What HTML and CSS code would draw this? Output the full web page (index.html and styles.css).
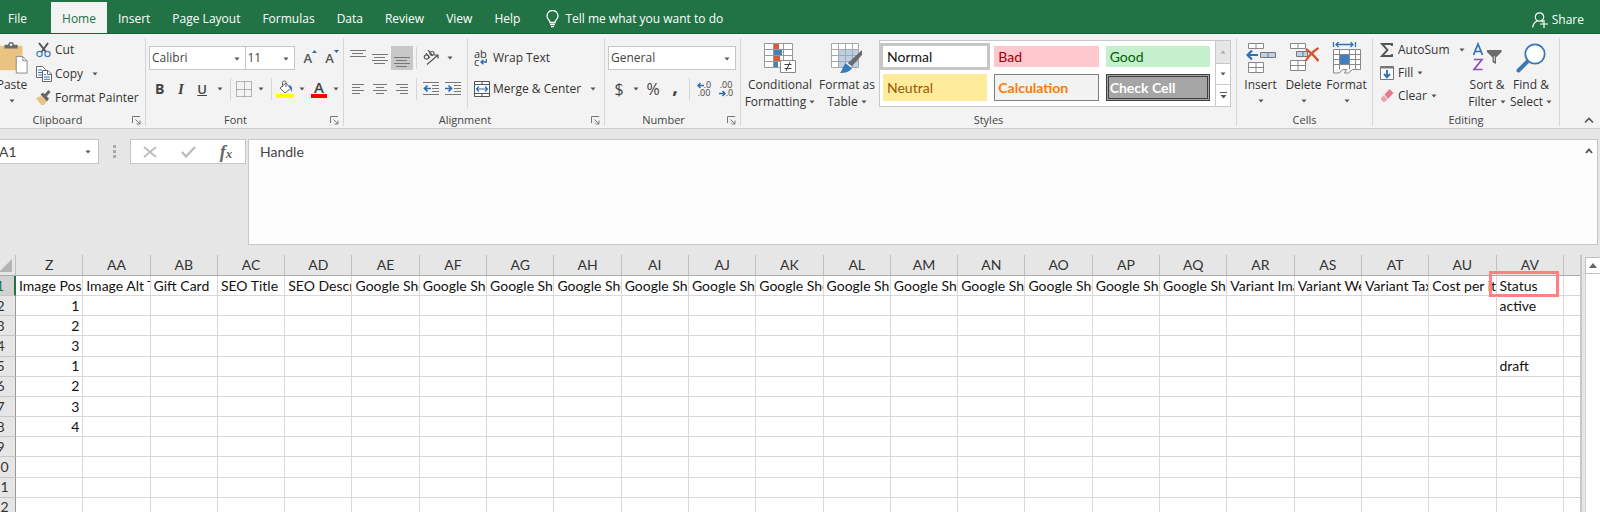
FILE: index.html
```html
<!DOCTYPE html>
<html lang="en">
<head>
<meta charset="utf-8">
<title>Products export</title>
<link rel="stylesheet" href="styles.css">
</head>
<body>
<svg class="defs" aria-hidden="true">
  <symbol id="caret" viewBox="0 0 6 4"><path d="M.5.5h5L3 3.5z" fill="#555"/></symbol>
  <symbol id="launch" viewBox="0 0 9 9"><path d="M.5 7V.5H8M3.5 3.5l4 4M8 4.500V8H4.500" fill="none" stroke="#777"/></symbol>
</svg>
<div class="app">
  <header class="tabs">
    <nav class="tab-list">
      <button class="tab file">File</button>
      <button class="tab active">Home</button>
      <button class="tab">Insert</button>
      <button class="tab">Page Layout</button>
      <button class="tab">Formulas</button>
      <button class="tab">Data</button>
      <button class="tab">Review</button>
      <button class="tab">View</button>
      <button class="tab">Help</button>
      <button class="tab tell"><svg width="13" height="18" viewBox="0 0 13 18" fill="none" stroke="#fff" stroke-width="1.300"><path d="M4 12.500C4 10 1 9 1 6a5.500 5.500 0 0 1 11 0c0 3-3 4-3 6.500zM4.200 14.500h4.600M5 16.700h3"/></svg>Tell me what you want to do</button>
    </nav>
    <button class="tab share"><svg width="16" height="16" viewBox="0 0 16 16" fill="none" stroke="#fff" stroke-width="1.200"><circle cx="7.500" cy="5" r="4.200"/><path d="M.700 15.500c.3-3.500 2-5.500 4.500-6.500M9.500 9l1.500 1M8 12h8M12 8v8"/></svg>Share</button>
  </header>

  <section class="ribbon">
    <div class="group clipboard">
      <div class="body">
        <button class="big paste"><svg width="34" height="34" viewBox="0 0 34 34"><path d="M1 4h27v26H1z" fill="#eac282"/><path d="M9 7V3h4a3 3 0 0 1 6 0h4v4z" fill="#6b6b6b"/><circle cx="16" cy="3" r="1.300" fill="#fff"/><path d="M21.500 15.500h7l4.500 4.500v13H21.500z" fill="#fff" stroke="#888"/><path d="M28.500 15.500V20H33" fill="none" stroke="#888"/></svg><span>Paste</span><svg class="caret"><use href="#caret"/></svg></button>
        <div class="stack">
          <button class="cmd"><svg width="16" height="16" viewBox="0 0 16 16"><path d="M3 1l7 9M12 1L5.500 10" stroke="#555" stroke-width="2" fill="none"/><g fill="none" stroke="#4a80b8" stroke-width="1.300"><circle cx="3.500" cy="12" r="2.600"/><circle cx="11.500" cy="12" r="2.600"/></g></svg>Cut</button>
          <button class="cmd"><svg width="16" height="16" viewBox="0 0 16 16"><path d="M.500.500h6l3 3v8h-9z" fill="#fff" stroke="#666"/><path d="M2 4h4M2 6.500h4M2 9h4" stroke="#3b78b5"/><path d="M6.500 4.500h5.500l3.500 3.500v7.500h-9z" fill="#fff" stroke="#666"/><path d="M11.500 4.500v4h4" fill="none" stroke="#666"/><path d="M8 8.500h2M8 11h6M8 13.300h6" stroke="#3b78b5"/></svg>Copy<svg class="caret far"><use href="#caret"/></svg></button>
          <button class="cmd"><svg width="16" height="16" viewBox="0 0 16 16"><path d="M0 8l5-2 6 5-3 4H5z" fill="#eac282"/><path d="M4.500 4.500L7 2.500l6 6-2 3z" fill="#666"/><path d="M9.500 5.500l4-4.500" stroke="#666" stroke-width="3"/></svg>Format Painter</button>
        </div>
      </div>
      <footer><span>Clipboard</span><button class="launch" aria-label="Clipboard settings"><svg><use href="#launch"/></svg></button></footer>
    </div>

    <div class="group font">
      <div class="body rows">
        <div class="row">
          <label class="pick face"><select aria-label="Font"><option>Calibri</option></select><svg class="caret"><use href="#caret"/></svg></label><label class="pick size"><select aria-label="Font size"><option>11</option></select><svg class="caret"><use href="#caret"/></svg></label>
          <button class="tool grow" aria-label="Increase font size"><span>A</span><svg width="5" height="3"><path d="M0 3L2.500 0 5 3z" fill="#2b6cab"/></svg></button>
          <button class="tool grow" aria-label="Decrease font size"><span>A</span><svg width="5" height="3"><path d="M0 0h5L2.500 3z" fill="#2b6cab"/></svg></button>
        </div>
        <div class="row">
          <button class="tool glyph"><b>B</b></button>
          <button class="tool glyph"><i>I</i></button>
          <button class="tool glyph"><u>U</u></button>
          <button class="tool drop" aria-label="Underline style"><svg class="caret"><use href="#caret"/></svg></button>
          <span class="sep"></span>
          <button class="tool" aria-label="Borders"><svg width="16" height="16" viewBox="0 0 16 16" fill="none"><path d="M.500.500h15v15H.500zM8.500.500v15M.500 8.500h15" stroke="#777" stroke-dasharray="1 1"/></svg></button>
          <button class="tool drop" aria-label="Border style"><svg class="caret"><use href="#caret"/></svg></button>
          <span class="sep"></span>
          <button class="tool" aria-label="Fill color"><svg width="18" height="18" viewBox="0 0 18 18"><path d="M4 8l6-5 4.500 5.500L9 13z" fill="#fff" stroke="#666"/><path d="M6.500 7V2a2 2 0 0 1 3.500 0v5" fill="none" stroke="#666"/><path d="M12.500 5c3 0 4.500 3 3 7-1-2-.5-4-3-7z" fill="#2b6cab"/><path d="M0 14h18v4H0z" fill="#ff0"/></svg></button>
          <button class="tool drop" aria-label="Fill color list"><svg class="caret"><use href="#caret"/></svg></button>
          <button class="tool ink" aria-label="Font color"><span>A</span></button>
          <button class="tool drop" aria-label="Font color list"><svg class="caret"><use href="#caret"/></svg></button>
        </div>
      </div>
      <footer><span>Font</span><button class="launch" aria-label="Font settings"><svg><use href="#launch"/></svg></button></footer>
    </div>

    <div class="group align">
      <div class="body">
        <div class="rows">
          <div class="row">
            <button class="tool" aria-label="Top align"><svg width="16" height="18" viewBox="0 0 16 18"><path d="M0 1.500h16M2 4.500h11M0 7.500h16" stroke="#777"/></svg></button>
            <button class="tool" aria-label="Middle align"><svg width="16" height="18" viewBox="0 0 16 18"><path d="M0 5.500h16M2 8.500h11M0 11.500h16M2 14.500h11" stroke="#777"/></svg></button>
            <button class="tool on" aria-label="Bottom align"><svg width="16" height="18" viewBox="0 0 16 18"><path d="M0 8.500h16M2 11.500h11M0 14.500h16M2 17.500h11" stroke="#777"/></svg></button>
            <span class="sep"></span>
            <button class="tool" aria-label="Orientation"><svg width="17" height="16" viewBox="0 0 17 16"><g fill="none" stroke="#555" stroke-width="1.200"><circle cx="3.500" cy="7" r="2.200"/><path d="M3 3l4 5"/><path d="M5 0l4.500 5.500"/><circle cx="9" cy="3.500" r="2"/><path d="M4 14.500L15 5M15 8.500V5h-4"/></g></svg></button>
            <button class="tool drop" aria-label="Orientation list"><svg class="caret"><use href="#caret"/></svg></button>
          </div>
          <div class="row">
            <button class="tool" aria-label="Align left"><svg width="14" height="12" viewBox="0 0 14 12"><path d="M1 1.500h12M1 4.500h8M1 7.500h12M1 10.500h8" stroke="#777"/></svg></button>
            <button class="tool" aria-label="Center"><svg width="14" height="12" viewBox="0 0 14 12"><path d="M0 1.500h14M3 4.500h8M0 7.500h14M3 10.500h8" stroke="#777"/></svg></button>
            <button class="tool" aria-label="Align right"><svg width="14" height="12" viewBox="0 0 14 12"><path d="M1 1.500h12M5 4.500h8M1 7.500h12M5 10.500h8" stroke="#777"/></svg></button>
            <span class="sep"></span>
            <button class="tool" aria-label="Decrease indent"><svg width="16" height="14" viewBox="0 0 16 14"><path d="M0 .500h16M9 3.500h7M9 6.500h7M9 9.500h7M0 12.500h16" stroke="#777"/><path d="M8 6.500H1.500M4.500 3.500l-3 3 3 3" fill="none" stroke="#2b6cab" stroke-width="1.700"/></svg></button>
            <button class="tool" aria-label="Increase indent"><svg width="16" height="14" viewBox="0 0 16 14"><path d="M0 .500h16M9 3.500h7M9 6.500h7M9 9.500h7M0 12.500h16" stroke="#777"/><path d="M0 6.500h6M3.500 3.500l3 3-3 3" fill="none" stroke="#2b6cab" stroke-width="1.700"/></svg></button>
          </div>
        </div>
        <div class="rows wide">
          <div class="row"><button class="cmd"><span class="wrap-ico"><span>ab</span><span>c<svg width="7" height="6" viewBox="0 0 7 6"><path d="M6.300 0v3H1M3.300.700L1 3l2.300 2.300" fill="none" stroke="#2b6cab" stroke-width="1.300"/></svg></span></span>Wrap Text</button></div>
          <div class="row"><button class="cmd"><svg width="16" height="16" viewBox="0 0 16 16"><path d="M.500.500h15v15H.500zM.500 3.500h15M.500 12.500h15M8 .500v3M8 12.500v3" fill="#fff" stroke="#555"/><path d="M2.500 8h11M5 5.500L2.500 8 5 10.500M11 5.500L13.500 8 11 10.500" fill="none" stroke="#2b6cab" stroke-width="1.200"/></svg>Merge &amp; Center<svg class="caret far"><use href="#caret"/></svg></button></div>
        </div>
      </div>
      <footer><span>Alignment</span><button class="launch" aria-label="Alignment settings"><svg><use href="#launch"/></svg></button></footer>
    </div>

    <div class="group number">
      <div class="body rows">
        <div class="row"><label class="pick format"><select aria-label="Number format"><option>General</option></select><svg class="caret"><use href="#caret"/></svg></label></div>
        <div class="row">
          <button class="tool sym">$</button>
          <button class="tool drop" aria-label="Currency list"><svg class="caret"><use href="#caret"/></svg></button>
          <button class="tool sym">%</button>
          <button class="tool sym comma">,</button>
          <span class="sep"></span>
          <button class="tool dec" aria-label="Increase decimal"><span><svg width="7" height="7" viewBox="0 0 7 7"><path d="M7 3.500H1M3.500 1L1 3.500 3.500 6" fill="none" stroke="#2b6cab" stroke-width="1.500"/></svg>.0</span><span>.00</span></button>
          <button class="tool dec" aria-label="Decrease decimal"><span>.00</span><span><svg width="7" height="7" viewBox="0 0 7 7"><path d="M0 3.500h6M3.500 1L6 3.500 3.500 6" fill="none" stroke="#2b6cab" stroke-width="1.500"/></svg>.0</span></button>
        </div>
      </div>
      <footer><span>Number</span><button class="launch" aria-label="Number settings"><svg><use href="#launch"/></svg></button></footer>
    </div>

    <div class="group styles">
      <div class="body">
        <button class="big cond"><svg width="32" height="30" viewBox="0 0 32 30"><path d="M.500.500h28v24H.500z" fill="#fff"/><path d="M9 .500h6v6H9zM9 13h7v6H9z" fill="#d65b36"/><path d="M9 7h9v6H9zM9 19h5v5.500H9z" fill="#4a80b8"/><path d="M.500.500h28v24H.500zM9.500 0v24M19.500 0v24M0 6.500h28M0 12.500h28M0 18.500h28" fill="none" stroke="#999"/><path d="M16.500 17.500h15v12h-15z" fill="#fff" stroke="#888"/><path d="M20.500 21.500h7M20.500 25.500h7M26 19l-4 9" stroke="#444" fill="none"/></svg><span>Conditional<br>Formatting <svg class="caret"><use href="#caret"/></svg></span></button>
        <button class="big fmt"><svg width="32" height="30" viewBox="0 0 32 30"><path d="M.500.500h27v24H.500z" fill="#fff"/><path d="M7 7h21v17H7z" fill="#bcd0ea"/><path d="M.500.500h27v24H.500zM7.500 0v24M14.500 0v24M21.500 0v24M0 6.500h27M0 12.500h27M0 18.500h27" fill="none" stroke="#a8a8a8"/><path d="M31 7v5L21 23l-4-3z" fill="#6b6b6b"/><path d="M16 20c3 0 5 2 5 5-2 4-7 5-12 5 3-3 3-9 7-10z" fill="#3b7ab8"/><path d="M15.500 20l5 4" stroke="#fff" stroke-width="1.500"/></svg><span>Format as<br>Table <svg class="caret"><use href="#caret"/></svg></span></button>
        <div class="gallery">
          <div class="swatches">
            <button class="swatch normal">Normal</button><button class="swatch bad">Bad</button><button class="swatch good">Good</button>
            <button class="swatch neutral">Neutral</button><button class="swatch calc">Calculation</button><button class="swatch check">Check Cell</button>
          </div>
          <div class="spin">
            <button class="dim" aria-label="Scroll styles up"><svg width="6" height="4"><path d="M.500 3.500h5L3 .500z" fill="#aaa"/></svg></button>
            <button aria-label="Scroll styles down"><svg class="caret"><use href="#caret"/></svg></button>
            <button aria-label="More styles"><svg width="7" height="7"><path d="M0 .500h7" stroke="#555"/><path d="M.500 3h6l-3 3.500z" fill="#555"/></svg></button>
          </div>
        </div>
      </div>
      <footer><span>Styles</span></footer>
    </div>

    <div class="group cells">
      <div class="body">
        <button class="big"><svg width="30" height="32" viewBox="0 0 30 32"><path d="M2.500 1.500h15v5h-15zM10 1.500v5M2.500 20.500h15v10h-15zM10 20.500v10M2.500 25.500h15" fill="#fff" stroke="#888"/><path d="M14.500 10.500h15v5h-15zM22 10.500v5" fill="#bcd0ea" stroke="#777"/><path d="M12 13H1.500M6 8.500L1.500 13 6 17.500" fill="none" stroke="#2f72b4" stroke-width="2.200"/></svg><span>Insert</span><svg class="caret"><use href="#caret"/></svg></button>
        <button class="big"><svg width="30" height="32" viewBox="0 0 30 32"><path d="M1.500 1.500h15v5h-15zM9 1.500v5M1.500 18.500h15v10h-15zM9 18.500v10M1.500 23.500h15" fill="#fff" stroke="#888"/><path d="M7.500 9.500h11v5h-11zM14 9.500v5" fill="#bcd0ea" stroke="#777"/><path d="M17 7c4 3 8 6 12.500 12M29.500 6c-5 3-9 7-13 13" fill="none" stroke="#d9532c" stroke-width="2.200"/></svg><span>Delete</span><svg class="caret"><use href="#caret"/></svg></button>
        <button class="big"><svg width="30" height="32" viewBox="0 0 30 32"><path d="M1.500 7.500h27v20h-27z" fill="#fff"/><path d="M8 13h9v9H8z" fill="#3f7fbe"/><path d="M1.500 31V7.500h27v20h-8l-4 3.500h-4l2-3.500H11l-4 3.500H1.500M1.500 12.500h27M1.500 17.500h6M18 17.500h10.500M1.500 22.500h27M7.500 7.500v20M17.500 7.500v20M23.500 7.500v20" fill="none" stroke="#888"/><path d="M1.500 0v5M23.500 0v5M4 2.500h17M6.500 0L4 2.500 6.500 5M18.500 0L21 2.500 18.500 5" fill="none" stroke="#2f72b4" stroke-width="1.300"/></svg><span>Format</span><svg class="caret"><use href="#caret"/></svg></button>
      </div>
      <footer><span>Cells</span></footer>
    </div>

    <div class="group editing">
      <div class="body">
        <div class="stack tight">
          <button class="cmd"><svg width="16" height="16" viewBox="0 0 16 16"><path d="M13 4V2H3l5.500 6L3 14h10v-2" fill="none" stroke="#555" stroke-width="1.900"/></svg>AutoSum<svg class="caret far"><use href="#caret"/></svg></button>
          <button class="cmd"><svg width="16" height="16" viewBox="0 0 16 16"><path d="M1.500 1.500h13v13h-13z" fill="#fff" stroke="#777"/><path d="M1.500 2.500h13" stroke="#777" stroke-width="2"/><path d="M8 5v7M5 9l3 3.300L11 9" fill="none" stroke="#2f72b4" stroke-width="1.900"/></svg>Fill<svg class="caret near"><use href="#caret"/></svg></button>
          <button class="cmd"><svg width="16" height="16" viewBox="0 0 16 16"><path d="M5.500 6.500L10.500 1l4 4-5.500 6z" fill="#e8788c"/><path d="M4.800 7.300l3.500 4L6 14H4L2 11.500V10z" fill="#f0a0ae"/></svg>Clear<svg class="caret near"><use href="#caret"/></svg></button>
        </div>
        <button class="big sort"><svg width="30" height="30" viewBox="0 0 30 30"><path d="M1.500 12L6 1l4.500 11M3 8.500h6" fill="none" stroke="#2f72b4" stroke-width="1.700"/><path d="M2 16.500h8L2 26.500h8.500" fill="none" stroke="#8a4fb8" stroke-width="1.700"/><path d="M15 7h14.500v2L24 14.500V21l-3.500-2v-4.500L15 9z" fill="#6b6b6b"/><path d="M22.300 13v5" stroke="#ddd"/></svg><span>Sort &amp;<br>Filter <svg class="caret"><use href="#caret"/></svg></span></button>
        <button class="big find"><svg width="30" height="30" viewBox="0 0 30 30"><path d="M2.500 27.500l9-9" stroke="#3b78b5" stroke-width="4" stroke-linecap="round"/><circle cx="19" cy="11" r="9.700" fill="#fff" stroke="#3b78b5" stroke-width="1.800"/></svg><span>Find &amp;<br>Select <svg class="caret"><use href="#caret"/></svg></span></button>
      </div>
      <footer><span>Editing</span></footer>
    </div>
    <div class="collapse"><button aria-label="Collapse the ribbon"><svg width="10" height="7"><path d="M1 5.500l4-4 4 4" fill="none" stroke="#555" stroke-width="1.600"/></svg></button></div>
  </section>

  <section class="formula">
    <label class="name"><input aria-label="Name box" value="A1"><svg class="caret"><use href="#caret"/></svg></label>
    <svg class="dots" width="3" height="13"><path d="M0 0h3v3H0zM0 5h3v3H0zM0 10h3v3H0z" fill="#aaa"/></svg>
    <div class="fx">
      <button aria-label="Cancel"><svg width="14" height="12"><path d="M1 1l12 10M13 1L1 11" stroke="#bcbcbc" stroke-width="1.800"/></svg></button>
      <button aria-label="Enter"><svg width="15" height="12"><path d="M1 6l4 4.500L14 1" fill="none" stroke="#bcbcbc" stroke-width="2.400"/></svg></button>
      <button class="fn" aria-label="Insert function"><i>f</i><i class="x">x</i></button>
    </div>
    <div class="entry"><textarea aria-label="Formula bar">Handle</textarea><button aria-label="Collapse formula bar"><svg width="8" height="6"><path d="M1 5l3-3.500L7 5" fill="none" stroke="#555" stroke-width="1.900"/></svg></button></div>
  </section>

  <main class="sheet">
    <div class="pane"><table class="grid"><thead></thead><tbody></tbody></table></div>
    <div class="scroll"><button aria-label="Scroll up"><svg width="8" height="5"><path d="M0 5h8L4 0z" fill="#666"/></svg></button><div class="track"></div></div>
  </main>
</div>
<script src="script.js"></script>
</body>
</html>
```
FILE: styles.css
```css
* { box-sizing: border-box; }
body {
  margin: 0;
  height: 100vh;
  overflow: hidden;
  background: #e6e6e6;
  color: #333;
  font: 12px/16px "Open Sans", "Noto Sans", sans-serif;
}
button, select, input, textarea {
  margin: 0; padding: 0; border: 0; background: none; color: inherit; font: inherit;
}
button { display: flex; align-items: center; justify-content: center; white-space: nowrap; }
svg { flex: none; display: block; }
.defs { position: absolute; width: 0; height: 0; }
.caret { width: 6px; height: 4px; }

/* The window's left edge is scrolled out of view */
.app { margin-left: -12px; height: 100%; display: flex; flex-direction: column; overflow: hidden; }

.tabs { flex: none; display: flex; justify-content: space-between; height: 34px; padding-top: 2px; background: #217346; border-bottom: 1px solid #1b6039; }
.tab-list { display: flex; }
.tab { padding: 2px 11px 0; color: #fff; }
.tab.file { width: 63px; padding: 2px 0 0 20px; justify-content: flex-start; }
.tab.active { width: 56px; background: #f3f3f3; color: #217346; }
.tab.tell { gap: 6px; margin-left: 4px; }
.tab.share { gap: 4px; padding: 4px 16px 0; }

.ribbon { flex: none; display: flex; height: 95px; padding: 4px 0 2px; background: #f3f3f3; border-bottom: 1px solid #cfcfcf; }
.group { flex: none; display: flex; flex-direction: column; border-right: 1px solid #d6d6d6; }
.clipboard { width: 158px; }
.font { width: 198px; }
.align { width: 261px; }
.number { width: 136px; }
.styles { flex: 1; }
.cells { width: 136px; }
.editing { width: 187px; }
.body { flex: 1; display: flex; }
.group footer { display: flex; height: 12px; align-items: center; font-size: 11px; line-height: 12px; color: #444; }
.group footer span { flex: 1; text-align: center; }
.launch { width: 18px; }
.launch svg { width: 9px; height: 9px; }

.big { flex-direction: column; justify-content: flex-start; padding-top: 4px; line-height: 17px; color: #333; }
.big > svg:first-child { height: 32px; margin-bottom: 2px; }
.big > .caret { margin-top: 6px; }
.big span .caret { display: inline-block; margin-bottom: 2px; }
.paste { width: 48px; }
.stack { display: flex; flex-direction: column; }
.cmd { height: 24px; justify-content: flex-start; gap: 3px; color: #333; }
.far { margin-left: 6px; }
.near { margin-left: 1px; }

.rows { display: flex; flex-direction: column; gap: 7px; padding-top: 8px; }
.row { display: flex; align-items: center; height: 24px; }
.font .body, .number .body, .align .body { padding-left: 3px; }
.tool { width: 22px; height: 24px; color: #444; }
.tool.on { background: #c8c8c8; }
.drop { width: 15px; }
.sep { width: 1px; height: 22px; margin: 0 3px; background: #d6d6d6; }
.pick { position: relative; height: 24px; border: 1px solid #c6c6c6; background: #fff; }
.pick select { width: 100%; height: 100%; padding-left: 2px; appearance: none; color: #444; }
.pick .caret { position: absolute; right: 5px; top: 10px; }
.face { width: 97px; }
.size { width: 50px; border-left: 0; }
.grow { font-size: 13px; font-weight: 600; color: #555; }
.grow svg { align-self: flex-start; margin-top: 4px; }
.size + .grow { margin-left: 4px; }
.glyph { width: 23px; font-size: 14px; }
.glyph i { font-family: "Liberation Serif", serif; font-size: 15px; font-weight: bold; }
.glyph u { font-weight: 600; font-size: 13px; }
.ink span { width: 16px; height: 17px; border-bottom: 4px solid #f00; font-size: 15px; line-height: 13px; font-weight: 600; }
.wide { margin-left: 3px; padding-left: 6px; border-left: 1px solid #d6d6d6; margin-bottom: 6px; }
.wrap-ico { width: 16px; font-size: 11px; line-height: 8px; text-align: left; }
.wrap-ico span { display: flex; align-items: center; gap: 1px; }
.format { width: 128px; }
.sym { font-size: 16px; }
.number .drop { width: 12px; }
.comma { padding-bottom: 6px; font-size: 20px; font-weight: bold; }
.dec { flex-direction: column; font-size: 9px; line-height: 8px; }
.dec span { display: flex; align-items: center; }

.cond { width: 74px; margin-left: 2px; }
.fmt { width: 60px; }
.gallery { flex: 1; display: flex; height: 67px; margin: 2px 5px 0 2px; background: #fff; border: 1px solid #c8c8c8; }
.swatches { flex: 1; display: grid; grid-template-columns: repeat(3, 1fr); gap: 7px; padding: 5px 5px 5px 3px; }
.swatch { justify-content: flex-start; padding-left: 4px; font: 14px/18px Lato, "Open Sans", sans-serif; }
.normal { color: #111; outline: 3px solid #c6c6c6; }
.bad { background: #ffc7ce; color: #9c0006; }
.good { background: #c6efce; color: #006100; }
.neutral { background: #ffeb9c; color: #9c5700; }
.calc { background: #f2f2f2; border: 1px solid #7f7f7f; color: #fa7d00; font-weight: bold; padding-left: 3px; }
.check { background: #a5a5a5; border: 3px double #3f3f3f; color: #fff; font-weight: bold; padding-left: 1px; }
.spin { display: grid; grid-template-rows: repeat(3, 1fr); width: 15px; border-left: 1px solid #c8c8c8; }
.spin button + button { border-top: 1px solid #c8c8c8; }
.spin .dim { background: #e6e6e6; }

.cells .body { padding-left: 2px; }
.cells .big { width: 43px; }
.editing .body { padding-left: 6px; }
.tight { width: 86px; }
.tight .cmd { height: 23px; }
.sort { width: 44px; }
.find { width: 44px; }
.collapse { width: 40px; display: flex; align-items: flex-end; justify-content: flex-end; padding: 0 6px 2px 0; }

.formula { flex: none; display: flex; align-items: flex-start; height: 124px; padding-top: 10px; }
.name { position: relative; width: 111px; height: 25px; border: 1px solid #c6c6c6; background: #fff; }
.name input { width: 100%; height: 100%; padding-left: 10px; font: 14px/18px Lato, sans-serif; color: #444; }
.name .caret { position: absolute; right: 7px; top: 10px; }
.dots { margin: 6px 14px 0 14px; }
.fx { display: flex; width: 116px; height: 25px; border: 1px solid #c6c6c6; background: #fff; }
.fx button { flex: 1; }
.fn i { font: italic bold 18px/20px "Liberation Serif", serif; color: #666; }
.fn .x { font-size: 13px; padding-top: 5px; }
.entry { flex: 1; display: flex; align-items: flex-start; height: 106px; margin: 0 2px; border: 1px solid #c6c6c6; background: #fdfdfd; }
.entry textarea { flex: 1; height: 100%; padding: 3px 11px; resize: none; outline: 0; font: 14px/18px Lato, sans-serif; color: #444; }
.entry button { width: 16px; height: 22px; }

.sheet { flex: 1; display: flex; align-items: flex-start; min-height: 0; padding-top: 2px; }
.pane { flex: 1; min-width: 0; }
.grid { width: 100%; height: 263px; table-layout: fixed; border-collapse: separate; border-spacing: 0; border-right: 2px solid #c6c6c6; background: #fff; font: 14px/18px Lato, sans-serif; color: #111; }
.grid th { height: 20px; padding: 0; background: #e6e6e6; border-right: 1px solid #c0c0c0; border-bottom: 1px solid #ababab; font-weight: normal; color: #333; }
.grid thead th { height: 21px; }
.grid tbody th { padding-right: 2px; border-right-color: #999; border-bottom-color: #c6c6c6; }
.grid tbody .picked { background: #d2d2d2; border-right: 2px solid #217346; color: #217346; }
.grid .lead { width: 28px; }
.grid .tail { width: 16px; border-right: 0; }
.lead svg { margin-left: auto; margin-right: 3px; }
.grid td { position: relative; height: 20px; padding: 0 0 0 3px; border-right: 1px solid #d8d8d8; border-bottom: 1px solid #d8d8d8; }
.grid td:last-child { border-right: 0; }
.text { overflow: hidden; white-space: nowrap; }
.num { padding-right: 3px; text-align: right; }
.mark { position: absolute; left: -8px; top: -5px; width: 70px; height: 26px; border: 3px solid #ff8080; }
.scroll { flex: none; width: 15px; margin: 2px 0 0 3px; align-self: stretch; display: flex; flex-direction: column; }
.scroll button { height: 17px; border: 1px solid #c0c0c0; border-right: 0; background: #fff; }
.track { flex: 1; border-left: 1px solid #d0d0d0; background: #fff; }
```
FILE: script.js
```js
const columns = ["Z"];
for (const c of "ABCDEFGHIJKLMNOPQRSTUV") columns.push("A" + c);

const titles = {
  Z: "Image Position", AA: "Image Alt Text", AB: "Gift Card", AC: "SEO Title", AD: "SEO Description",
  AR: "Variant Image", AS: "Variant Weight Unit", AT: "Variant Tax Code", AU: "Cost per item", AV: "Status"
};
for (const c of "EFGHIJKLMNOPQ") titles["A" + c] = "Google Shopping";

const positions = { 2: 1, 3: 2, 4: 3, 5: 1, 6: 2, 7: 3, 8: 4 };
const statuses = { 2: "active", 5: "draft" };

function value(row, col) {
  if (row === 1) return titles[col];
  if (col === "Z") return positions[row] || "";
  if (col === "AV") return statuses[row] || "";
  return "";
}

document.querySelector(".grid thead").innerHTML =
  '<tr><th class="lead"><svg width="13" height="13"><path d="M13 0v13H0z" fill="#b4b4b4"/></svg></th>' +
  columns.map(c => `<th>${c}</th>`).join("") + '<th class="tail"></th></tr>';

let html = "";
for (let r = 1; r <= 12; r++) {
  html += `<tr><th class="${r === 1 ? "picked" : ""}">${r}</th>`;
  for (const c of columns) {
    const v = value(r, c);
    const num = typeof v === "number" ? " num" : "";
    const mark = r === 1 && c === "AV" ? '<div class="mark"></div>' : "";
    html += `<td>${v === "" ? "" : `<div class="text${num}">${v}</div>`}${mark}</td>`;
  }
  html += "<td></td></tr>";
}
document.querySelector(".grid tbody").innerHTML = html;
```
